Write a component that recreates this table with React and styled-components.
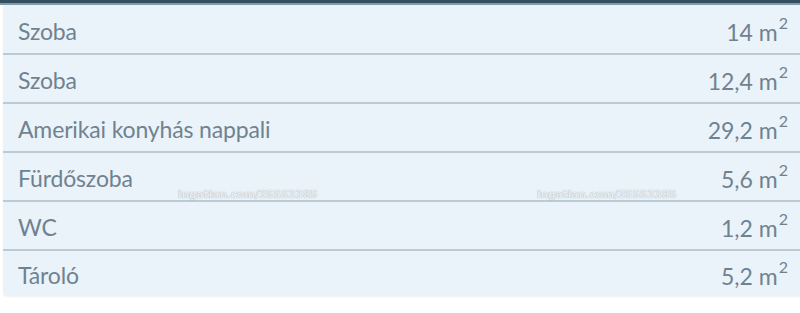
import React from "react";
import styled, { createGlobalStyle } from "styled-components";

const GlobalStyle = createGlobalStyle`
    html, body {
        margin: 0;
        padding: 0;
        background: #ffffff;
    }
    body {
        font-family: Lato, "Open Sans", sans-serif;
    }
`;

const Page = styled.div`
    position: relative;
    width: 800px;
    height: 313px;
    overflow: hidden;
    background: #ffffff;
`;

const TopBar = styled.div`
    height: 3px;
    background: #34505f;
    border-bottom: 2px solid #7d9cac;
`;

const Panel = styled.div`
    margin-left: 3px;
    width: 812px;
    background: #eaf3fa;
    border-radius: 0 0 4px 4px;
    box-shadow: 0 1px 2px rgba(0, 0, 0, 0.06);
`;

const Row = styled.div`
    display: flex;
    justify-content: space-between;
    align-items: center;
    box-sizing: border-box;
    height: ${(p) => p.h}px;
    padding: 3px 27px 0 15px;
    border-top: ${(p) => (p.first ? "none" : "2px solid #bccad3")};
`;

const Label = styled.span`
    font-family: Lato, "Open Sans", sans-serif;
    font-size: 23px;
    color: #708290;
    letter-spacing: -0.15px;
`;

const Area = styled.span`
    font-family: Lato, "Open Sans", sans-serif;
    font-size: 23px;
    color: #708290;
    sup {
        font-size: 16px;
        position: relative;
        top: -3px;
        margin-left: 1px;
    }
`;

const Watermark = styled.div`
    position: absolute;
    top: 188px;
    left: ${(p) => p.left}px;
    font-family: "DejaVu Sans", sans-serif;
    font-weight: bold;
    font-size: 10.5px;
    color: rgba(238, 241, 244, 0.95);
    text-shadow: 0 0 1px rgba(110, 120, 130, 0.7);
    pointer-events: none;
`;

const rooms = [
    { name: "Szoba", area: "14" },
    { name: "Szoba", area: "12,4" },
    { name: "Amerikai konyhás nappali", area: "29,2" },
    { name: "Fürdőszoba", area: "5,6" },
    { name: "WC", area: "1,2" },
    { name: "Tároló", area: "5,2" },
];

// row heights include the 2px divider on all rows but the first
const rowHeight = (index) => {
    if (index === 0) return 48;
    if (index === rooms.length - 1) return 47;
    return 49;
};

const App = () => (
    <>
        <GlobalStyle />
        <Page>
            <TopBar />
            <Panel>
                {rooms.map((room, index) => (
                    <Row key={index} first={index === 0} h={rowHeight(index)}>
                        <Label>{room.name}</Label>
                        <Area>
                            {room.area} m<sup>2</sup>
                        </Area>
                    </Row>
                ))}
            </Panel>
            <Watermark left={178}>ingatlan.com/35553385</Watermark>
            <Watermark left={537}>ingatlan.com/35553385</Watermark>
        </Page>
    </>
);

export default App;
